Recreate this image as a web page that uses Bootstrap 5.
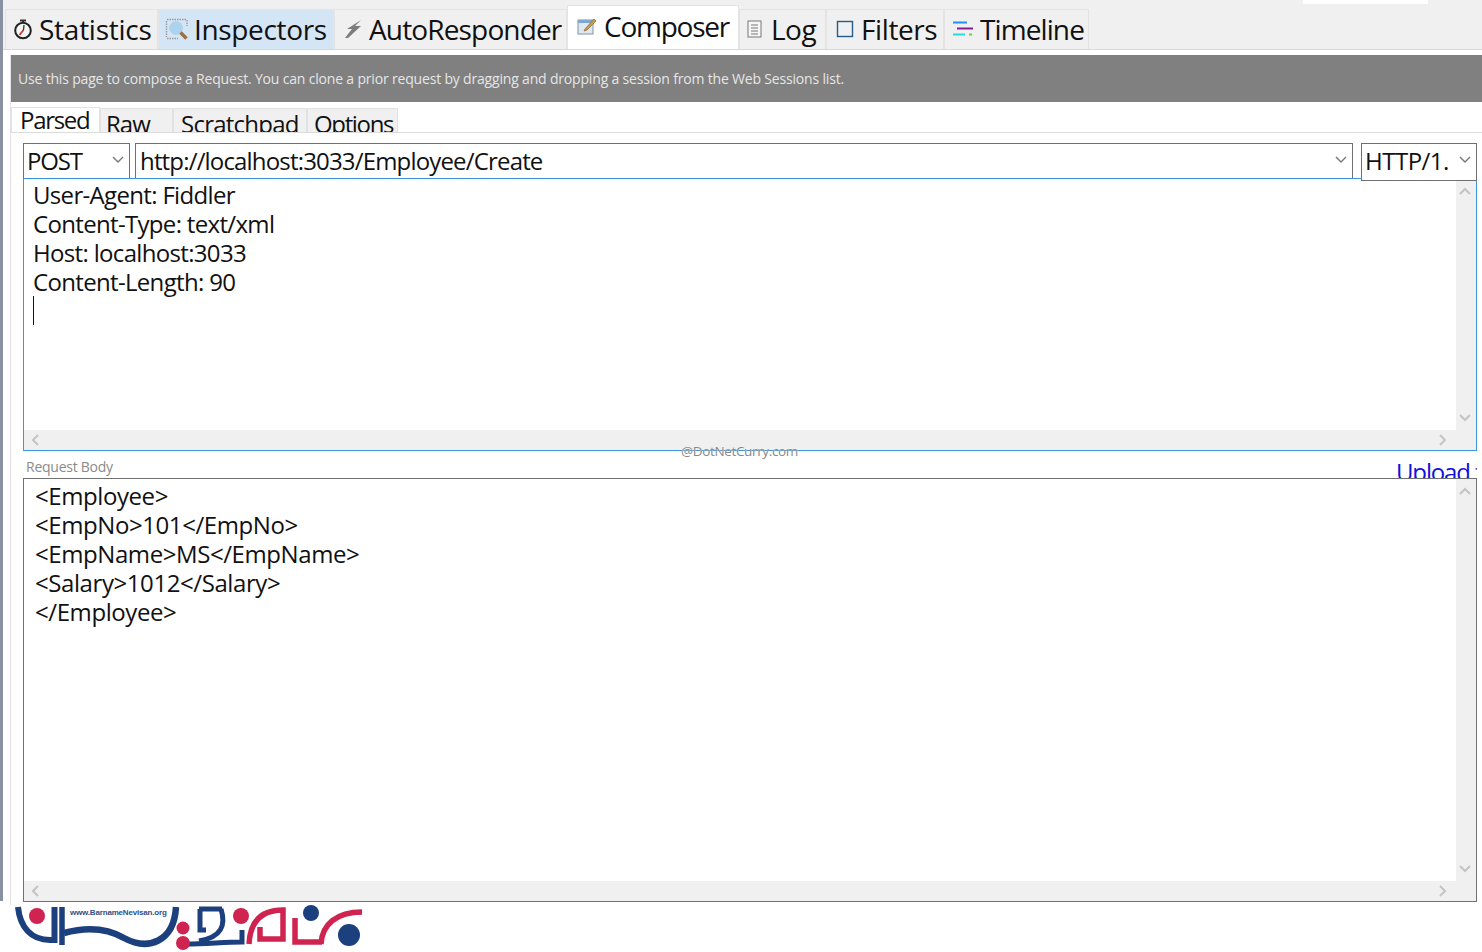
<!DOCTYPE html>
<html lang="en">
<head>
<meta charset="utf-8">
<title>Fiddler Composer</title>
<link href="https://cdn.jsdelivr.net/npm/bootstrap@5.3.0/dist/css/bootstrap.min.css" rel="stylesheet">
<style>
html,body{height:952px;overflow:hidden;background:#fff}
body{font-family:"Open Sans","Noto Sans","Liberation Sans",sans-serif;color:#111}
.app-shell{height:901px;border-left:3px solid #87919f}
.top-strip{height:50px;background:#f0f0f0;border-bottom:1px solid #d8d8d8;padding-left:2px}
.top-patch{top:0;left:1303px;width:125px;height:4px;background:#fff}
.main-tab{height:40px;background:#f0f0f0;border:1px solid #e4e4e4;border-bottom:0;font-size:28px;line-height:36px;white-space:nowrap;overflow:hidden;padding-bottom:2px}
.main-tab svg{flex:none}
.t-stat{width:153px;padding-left:7px;gap:6px;letter-spacing:-.25px}
.t-insp{width:176px;background:#d4e5f5;padding-left:6px;gap:5px;letter-spacing:-.35px}
.t-auto{width:233px;padding-left:9px;gap:7px;letter-spacing:-.85px}
.t-comp{width:172px;height:44px;background:#fff;padding-left:9px;gap:7px;padding-bottom:3px;letter-spacing:-1.25px}
.t-log{width:87px;padding-left:7px;gap:9px;letter-spacing:-.5px}
.t-filt{width:118px;padding-left:9px;gap:7px;letter-spacing:-.4px}
.t-time{width:145px;padding-left:7px;gap:7px;letter-spacing:-.9px}
.work-pane{margin-left:7px;height:850px;border-left:1px solid #e2e2e2}
.info-banner{margin-top:5px;height:47px;background:#808080;color:#e6e6e6;font-size:14px;line-height:48px;padding-left:7px;letter-spacing:-.18px;white-space:nowrap}
.sub-strip{height:31px;border-bottom:1px solid #dcdcdc;overflow:hidden}
.sub-tab{height:24px;background:#f0f0f0;border:1px solid #e2e2e2;border-bottom:0;font-size:24px;line-height:30px;white-space:nowrap;overflow:hidden;padding-left:7px}
.s-parsed{width:89px;height:25px;background:#fff;line-height:24px;padding-left:8px;letter-spacing:-1.3px}
.s-raw{width:73px;padding-left:5px;letter-spacing:-.95px}
.s-scratch{width:134px;letter-spacing:-.75px}
.s-opt{width:91px;padding-left:6px;letter-spacing:-1.35px}
.form-area{padding:10px 5px 0 12px}
.req-row{height:35px;gap:5px}
.drop-box{height:35px;background:#fff;border:1px solid #707070;border-bottom:0;font-size:24px;line-height:33px;letter-spacing:-.83px;padding-left:3px;padding-right:5px;padding-bottom:2px;white-space:nowrap}
.d-post{width:107px;letter-spacing:-1.2px}
.d-url{width:1218px;padding-left:4px}
.d-http{width:116px;height:38px;margin-left:3px;border-bottom:1px solid #707070;position:relative;z-index:2;letter-spacing:-.5px;padding-bottom:4px}
.edit-frame{display:grid;grid-template-columns:1fr 20px;grid-template-rows:1fr 20px;background:#fff;border:1px solid #707070}
.head-frame{height:273px;border-color:#3a96dd}
.body-frame{height:424px}
.edit-text{grid-column:1;grid-row:1;font-size:24px;line-height:29px;letter-spacing:-.67px;white-space:pre;padding:1px 0 0 9px;overflow:hidden}
.body-frame .edit-text{padding:2px 0 0 11px;letter-spacing:-.42px}
.caret-line{display:block;width:1px;height:29px;background:#111}
.vbar{grid-column:2;grid-row:1;background:#f0f0f0;padding-right:3px}
.hbar{grid-column:1;grid-row:2;background:#f0f0f0;padding:0 9px 0 7px}
.hbar-corner{grid-column:2;grid-row:2;background:#f0f0f0}
.body-head{height:27px;overflow:hidden;padding-left:3px}
.body-label{font-size:14px;line-height:32px;color:#8b8b8b;letter-spacing:-.25px}
.upload-link{font-size:24px;line-height:42px;color:#1010e0;text-decoration:none;margin-left:auto;margin-right:-5px;width:86px;white-space:nowrap;letter-spacing:-1.15px}
.water-mark{left:681px;top:443px;font-size:13.500px;color:#888;line-height:16px;text-shadow:0 0 1px #fff;white-space:nowrap;letter-spacing:-.35px}
.logo-wrap{padding:4px 0 0 15px;line-height:0}
.logo-site{font-family:"Liberation Sans",sans-serif;font-size:8px;font-weight:700;letter-spacing:-.18px;fill:#2f4f8a}
</style>
</head>
<body class="position-relative">
<div class="app-shell">
  <div class="top-strip d-flex align-items-end position-relative">
    <div class="main-tab t-stat d-flex align-items-center">
      <svg width="20" height="22" viewBox="0 0 20 22"><circle cx="10" cy="12.500" r="7.800" fill="#f4f8f6" stroke="#222" stroke-width="2"/><path d="M7 2.500h6M10 2.500v2" stroke="#333" stroke-width="2"/><path d="M10.500 12 6.500 17" stroke="#c33" stroke-width="1.800"/><path d="M10.500 12 11 7" stroke="#333" stroke-width="1.300"/></svg>
      <span>Statistics</span>
    </div>
    <div class="main-tab t-insp d-flex align-items-center">
      <svg width="24" height="24" viewBox="0 0 24 24"><g fill="none" stroke="#9a9a9a" stroke-width="1.400" stroke-dasharray="1.500 1"><path d="M2 2.500h19M2 21.500h11M1.500 4v16M22 3v6"/></g><circle cx="11" cy="11" r="6.500" fill="#a9d3ee" stroke="#b8d4e6" stroke-width="1"/><path d="m15.500 15.500 6 6" stroke="#9b7048" stroke-width="3.500"/></svg>
      <span>Inspectors</span>
    </div>
    <div class="main-tab t-auto d-flex align-items-center">
      <svg width="18" height="22" viewBox="0 0 18 22"><path d="M17 2 3 11h5l-7 9 3 0 13-12h-6z" fill="#7d7d7d"/></svg>
      <span>AutoResponder</span>
    </div>
    <div class="main-tab t-comp d-flex align-items-center">
      <svg width="20" height="20" viewBox="0 0 20 20"><rect x="1" y="4" width="15" height="14" fill="#dfe7ef" stroke="#7e93ab"/><path d="M1 4h15v3H1z" fill="#7ea6cf"/><path d="m8 13 9-10 2 2-9 9-3 1z" fill="#c99a4d" stroke="#8a6a35" stroke-width=".7"/></svg>
      <span>Composer</span>
    </div>
    <div class="main-tab t-log d-flex align-items-center">
      <svg width="15" height="18" viewBox="0 0 15 18"><rect x="1" y="1" width="13" height="16" fill="#f7f7f7" stroke="#777"/><path d="M4 5h7M4 8h7M4 11h7M4 14h7" stroke="#777"/></svg>
      <span>Log</span>
    </div>
    <div class="main-tab t-filt d-flex align-items-center">
      <svg width="18" height="18" viewBox="0 0 18 18"><rect x="1.500" y="1.500" width="15" height="15" fill="#eef1f3" stroke="#2c5a86" stroke-width="1.400"/></svg>
      <span>Filters</span>
    </div>
    <div class="main-tab t-time d-flex align-items-center">
      <svg width="21" height="18" viewBox="0 0 21 18"><path d="M1 2.500h14" stroke="#1e90ff" stroke-width="2"/><path d="M5 8.500h16" stroke="#8a1a9a" stroke-width="2"/><path d="M1 14.500h12" stroke="#27dbe0" stroke-width="2"/><path d="M17 14.500h3" stroke="#6fd03a" stroke-width="2"/></svg>
      <span>Timeline</span>
    </div>
  </div>
  <div class="work-pane">
    <div class="info-banner">Use this page to compose a Request. You can clone a prior request by dragging and dropping a session from the Web Sessions list.</div>
    <div class="sub-strip d-flex align-items-end">
      <div class="sub-tab s-parsed">Parsed</div>
      <div class="sub-tab s-raw">Raw</div>
      <div class="sub-tab s-scratch">Scratchpad</div>
      <div class="sub-tab s-opt">Options</div>
    </div>
    <div class="form-area">
      <div class="req-row d-flex align-items-start">
        <div class="drop-box d-post d-flex justify-content-between align-items-center"><span>POST</span><svg width="12" height="8" viewBox="0 0 12 8"><path d="m1 1 5 5 5-5" fill="none" stroke="#777" stroke-width="1.400"/></svg></div>
        <div class="drop-box d-url d-flex justify-content-between align-items-center"><span>http://localhost:3033/Employee/Create</span><svg width="12" height="8" viewBox="0 0 12 8"><path d="m1 1 5 5 5-5" fill="none" stroke="#777" stroke-width="1.400"/></svg></div>
        <div class="drop-box d-http d-flex justify-content-between align-items-center"><span>HTTP/1.</span><svg width="12" height="8" viewBox="0 0 12 8"><path d="m1 1 5 5 5-5" fill="none" stroke="#777" stroke-width="1.400"/></svg></div>
      </div>
      <div class="edit-frame head-frame">
        <div class="edit-text">User-Agent: Fiddler
Content-Type: text/xml
Host: localhost:3033
Content-Length: 90
<span class="caret-line"></span></div>
        <div class="vbar d-flex flex-column justify-content-between align-items-center py-2">
          <svg width="12" height="8" viewBox="0 0 12 8"><path d="m1 7 5-5 5 5" fill="none" stroke="#c4c4c4" stroke-width="2"/></svg>
          <svg width="12" height="8" viewBox="0 0 12 8"><path d="m1 1 5 5 5-5" fill="none" stroke="#c4c4c4" stroke-width="2"/></svg>
        </div>
        <div class="hbar d-flex justify-content-between align-items-center">
          <svg width="8" height="12" viewBox="0 0 8 12"><path d="m7 1-5 5 5 5" fill="none" stroke="#c4c4c4" stroke-width="2"/></svg>
          <svg width="8" height="12" viewBox="0 0 8 12"><path d="m1 1 5 5-5 5" fill="none" stroke="#c4c4c4" stroke-width="2"/></svg>
        </div>
        <div class="hbar-corner"></div>
      </div>
      <div class="body-head d-flex">
        <span class="body-label">Request Body</span>
        <a class="upload-link" href="#">Upload file</a>
      </div>
      <div class="edit-frame body-frame">
        <div class="edit-text">&lt;Employee&gt;
&lt;EmpNo&gt;101&lt;/EmpNo&gt;
&lt;EmpName&gt;MS&lt;/EmpName&gt;
&lt;Salary&gt;1012&lt;/Salary&gt;
&lt;/Employee&gt;</div>
        <div class="vbar d-flex flex-column justify-content-between align-items-center py-2">
          <svg width="12" height="8" viewBox="0 0 12 8"><path d="m1 7 5-5 5 5" fill="none" stroke="#c4c4c4" stroke-width="2"/></svg>
          <svg width="12" height="8" viewBox="0 0 12 8"><path d="m1 1 5 5 5-5" fill="none" stroke="#c4c4c4" stroke-width="2"/></svg>
        </div>
        <div class="hbar d-flex justify-content-between align-items-center">
          <svg width="8" height="12" viewBox="0 0 8 12"><path d="m7 1-5 5 5 5" fill="none" stroke="#c4c4c4" stroke-width="2"/></svg>
          <svg width="8" height="12" viewBox="0 0 8 12"><path d="m1 1 5 5-5 5" fill="none" stroke="#c4c4c4" stroke-width="2"/></svg>
        </div>
        <div class="hbar-corner"></div>
      </div>
    </div>
  </div>
</div>
<div class="top-patch position-absolute"></div>
<div class="water-mark position-absolute">@DotNetCurry.com</div>
<div class="logo-wrap">
  <svg width="350" height="47" viewBox="15 905 350 47">
    <g fill="none" stroke="#1c3f7e">
      <path d="M18 907c2 20 13 33 32 33h4.500V907" stroke-width="6"/>
      <path d="M62 907v38" stroke-width="5.500"/>
      <path d="M64 933c26-7 46-3 60 5 24 13 50 4 52-31" stroke-width="6.500"/>
      <path d="M199 909h23" stroke-width="5"/>
      <path d="M200 909v21h6" stroke-width="5"/>
      <path d="M221 909c5 16 1 28-22 32" stroke-width="5"/>
      <path d="M186 944c20 0 38-2 56-2v-12" stroke-width="5"/>
    </g>
    <text class="logo-site" x="70" y="915">www.BarnameNevisan.org</text>
    <circle cx="37" cy="916" r="8" fill="#cf2350"/>
    <circle cx="183" cy="928" r="6.500" fill="#cf2350"/>
    <circle cx="183" cy="943" r="7" fill="#cf2350"/>
    <circle cx="241" cy="916" r="8" fill="#cf2350"/>
    <g fill="none" stroke="#cf2350" stroke-width="5.500">
      <path d="M249 944c1-20 10-34 34-34v29h-23v-12"/>
      <path d="M295 918v24h27"/>
      <path d="M321 944c1-20 16-32 41-32"/>
    </g>
    <circle cx="311" cy="913" r="8" fill="#1c3f7e"/>
    <circle cx="349" cy="935" r="11" fill="#1c3f7e"/>
  </svg>
</div>
<script src="https://cdn.jsdelivr.net/npm/bootstrap@5.3.0/dist/js/bootstrap.bundle.min.js"></script>
</body>
</html>
